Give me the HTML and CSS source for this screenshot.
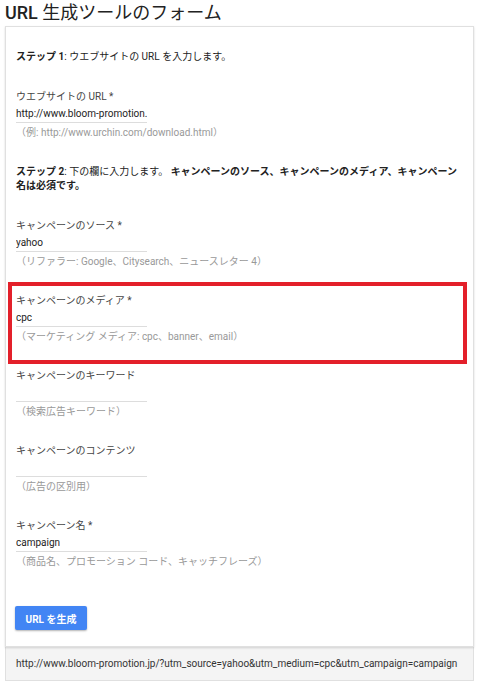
FILE: index.html
```html
<!DOCTYPE html>
<html>
<head>
    <title>URL 生成ツールのフォーム</title>
    <link rel="stylesheet" href="styles.css">
</head>
<body>
    <h1 class="page-title"><span class="latin">URL</span> 生成ツールのフォーム</h1>
    <div class="card">
        <p class="step"><b>ステップ 1</b>: ウエブサイトの URL を入力します。</p>
        <div class="field">
            <label for="url">ウエブサイトの URL *</label>
            <input type="text" id="url" value="http://www.bloom-promotion.">
            <div class="hint">（例: http://www.urchin.com/download.html）</div>
        </div>
        <p class="step step-two"><b>ステップ 2</b>: 下の欄に入力します。 <b>キャンペーンのソース、キャンペーンのメディア、キャンペーン名は必須です。</b></p>
        <div class="field">
            <label for="source">キャンペーンのソース *</label>
            <input type="text" id="source" value="yahoo">
            <div class="hint">（リファラー: Google、Citysearch、ニュースレター 4）</div>
        </div>
        <div class="field highlight">
            <label for="medium">キャンペーンのメディア *</label>
            <input type="text" id="medium" value="cpc">
            <div class="hint">（マーケティング メディア: cpc、banner、email）</div>
        </div>
        <div class="field">
            <label for="term">キャンペーンのキーワード</label>
            <input type="text" id="term" value="">
            <div class="hint">（検索広告キーワード）</div>
        </div>
        <div class="field">
            <label for="content">キャンペーンのコンテンツ</label>
            <input type="text" id="content" value="">
            <div class="hint">（広告の区別用）</div>
        </div>
        <div class="field">
            <label for="campaign">キャンペーン名 *</label>
            <input type="text" id="campaign" value="campaign">
            <div class="hint">（商品名、プロモーション コード、キャッチフレーズ）</div>
        </div>
        <button class="generate">URL を生成</button>
    </div>
    <div class="result">http://www.bloom-promotion.jp/?utm_source=yahoo&amp;utm_medium=cpc&amp;utm_campaign=campaign</div>
</body>
</html>
```

FILE: styles.css
```css
body {
    margin: 0;
    background-color: #ffffff;
    font-family: Roboto, "Noto Sans CJK JP", sans-serif;
    color: #333333;
}
.page-title {
    margin: 0 0 0 5px;
    height: 26px;
    line-height: 26px;
    font-size: 18px;
    font-weight: normal;
    color: #222222;
}
.page-title .latin {
    font-weight: 500;
}
.card {
    box-sizing: border-box;
    width: 469px;
    margin-left: 5px;
    padding: 23px 10px 16px 10px;
    border: 1px solid #e0e0e0;
    box-shadow: 0 1px 2px rgba(0, 0, 0, 0.15);
    position: relative;
}
.step {
    margin: 0 0 26px 0;
    font-size: 10px;
    line-height: 14px;
    color: #222222;
}
.step b {
    font-weight: bold;
}
.step-two {
    margin-top: 24px;
}
.field {
    margin-bottom: 25px;
    font-size: 10px;
}
.field label {
    display: block;
    line-height: 14px;
    color: #444444;
}
.field input {
    display: block;
    box-sizing: border-box;
    width: 131px;
    height: 19px;
    padding: 0;
    border: none;
    border-bottom: 1px solid #dddddd;
    background: transparent;
    font-family: Roboto, "Noto Sans CJK JP", sans-serif;
    font-size: 10px;
    color: #222222;
    outline: none;
}
.field .hint {
    margin-top: 3px;
    line-height: 14px;
    color: #999999;
}
/* annotation frame over the medium field */
.highlight {
    position: relative;
}
.highlight::after {
    content: "";
    position: absolute;
    left: -8px;
    top: -12px;
    width: 451px;
    height: 74px;
    border: 4px solid #e3202a;
}
.generate {
    display: block;
    width: 72px;
    height: 24px;
    margin: 37px 0 0 -1px;
    border: none;
    border-radius: 2px;
    background-color: #4285f4;
    color: #ffffff;
    font-family: Roboto, "Noto Sans CJK JP", sans-serif;
    font-size: 10px;
    font-weight: bold;
    box-shadow: 0 1px 2px rgba(0, 0, 0, 0.3);
}
.result {
    box-sizing: border-box;
    width: 469px;
    height: 34px;
    margin-left: 5px;
    padding-left: 10px;
    border: 1px solid #e0e0e0;
    border-top: none;
    background-color: #f4f4f4;
    font-size: 10px;
    line-height: 33px;
    color: #333333;
}
```
